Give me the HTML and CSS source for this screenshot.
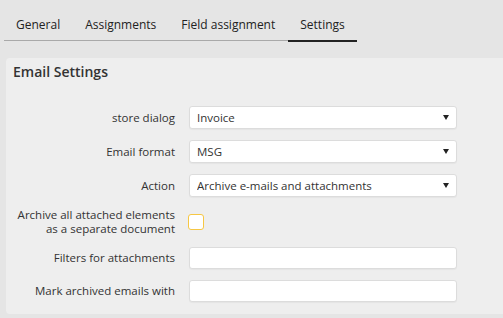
FILE: index.html
```html
<!DOCTYPE html>
<html lang="en">

<head>
    <meta charset="UTF-8">
    <meta name="viewport" content="width=device-width, initial-scale=1.0">
    <title>Email Settings</title>
    <link rel="stylesheet" href="styles.css">
</head>

<body>
    <div class="tabs">
        <div class="tab">General</div>
        <div class="tab">Assignments</div>
        <div class="tab">Field assignment</div>
        <div class="tab active">Settings</div>
    </div>

    <div class="panel">
        <h2 class="panel-title">Email Settings</h2>

        <div class="form">
            <label class="label" for="storeDialog">store dialog</label>
            <div class="select">
                <select id="storeDialog">
                    <option>Invoice</option>
                </select>
            </div>

            <label class="label" for="emailFormat">Email format</label>
            <div class="select">
                <select id="emailFormat">
                    <option>MSG</option>
                </select>
            </div>

            <label class="label" for="action">Action</label>
            <div class="select">
                <select id="action">
                    <option>Archive e-mails and attachments</option>
                </select>
            </div>

            <label class="label" for="separateDoc">Archive all attached elements<br>as a separate document</label>
            <div class="check-cell">
                <input type="checkbox" id="separateDoc" class="checkbox">
            </div>

            <label class="label" for="filters">Filters for attachments</label>
            <input type="text" id="filters" class="text-input">

            <label class="label" for="markWith">Mark archived emails with</label>
            <input type="text" id="markWith" class="text-input">
        </div>
    </div>
</body>

</html>
```

FILE: styles.css
```css
body {
    margin: 0;
    font-family: "Open Sans", Arial, sans-serif;
    background-color: #e5e5e5;
    color: #333;
    overflow: hidden;
}

.tabs {
    display: inline-flex;
    margin: 6px 0 0 3.5px;
    border-bottom: 1px solid #a9a9a9;
}

.tab {
    padding: 10px 12.5px 5px;
    font-size: 12px;
    line-height: 18px;
    color: #222;
    border-bottom: 2px solid transparent;
    margin-bottom: -1px;
    cursor: pointer;
}

.tab.active {
    border-bottom-color: #222;
    margin-bottom: -2px;
    padding-bottom: 6px;
}

.panel {
    margin: 17px 0 0 6px;
    background-color: #eeeeee;
    border-radius: 4px 0 0 4px;
    height: 256px;
    box-sizing: border-box;
    padding-top: 3px;
}

.panel-title {
    margin: 0;
    padding-left: 7px;
    font-size: 14px;
    font-weight: 600;
    line-height: 22px;
    color: #333;
}

.form {
    display: grid;
    grid-template-columns: 169px 268px;
    column-gap: 14px;
    row-gap: 11px;
    align-items: center;
    margin-top: 23px;
}

.label {
    font-size: 11.5px;
    line-height: 14px;
    text-align: right;
    white-space: nowrap;
    color: #333;
}

.select {
    position: relative;
}

.select select,
.text-input {
    width: 100%;
    height: 23px;
    box-sizing: border-box;
    border: 1px solid #dcdcdc;
    border-radius: 3px;
    background: white;
    box-shadow: 0 1px 1px rgba(0, 0, 0, 0.04);
    font-family: "Open Sans", Arial, sans-serif;
    font-size: 11.5px;
    color: #333;
    padding: 0 7px;
    outline: none;
    display: block;
}

.text-input {
    height: 22px;
}

.select select {
    appearance: none;
    -webkit-appearance: none;
}

.select::after {
    content: "";
    position: absolute;
    right: 8px;
    top: 9px;
    border-left: 3px solid transparent;
    border-right: 3px solid transparent;
    border-top: 5px solid #222;
    pointer-events: none;
}

.check-cell {
    display: flex;
    align-items: center;
}

.checkbox {
    appearance: none;
    -webkit-appearance: none;
    margin: 0 0 0 -1px;
    width: 16px;
    height: 16px;
    border: 1px solid #f6c744;
    border-radius: 3px;
    background: white;
}
```
